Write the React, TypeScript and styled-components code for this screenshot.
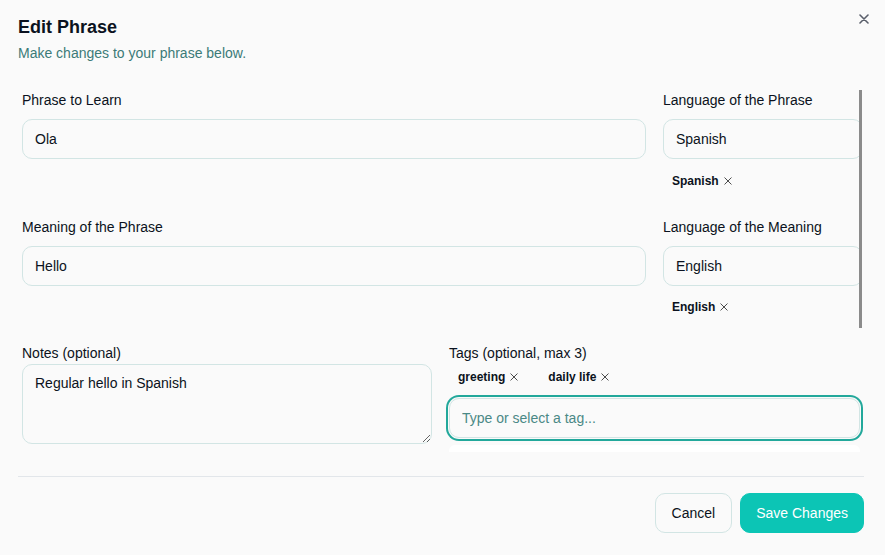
import React from "react";
import styled, { createGlobalStyle } from "styled-components";

const Global = createGlobalStyle`
  html, body { margin: 0; padding: 0; background: #fafafa; }
  body { font-family: "Liberation Sans", Arial, sans-serif; color: #0b1220; }
  * { box-sizing: border-box; }
`;

const Dialog = styled.div`
  position: relative;
  width: 885px;
  height: 555px;
  padding: 15px 21px 0 18px;
  display: flex;
  flex-direction: column;
`;

const Title = styled.h2`
  margin: 0;
  font-size: 18px;
  line-height: 24px;
  font-weight: 700;
  color: #0b1220;
`;

const Subtitle = styled.p`
  margin: 4px 0 0;
  font-size: 14px;
  line-height: 20px;
  color: #3c7b78;
`;

const CloseButton = styled.button`
  position: absolute;
  top: 12px;
  right: 14px;
  width: 14px;
  height: 14px;
  padding: 0;
  border: none;
  background: transparent;
  display: flex;
  align-items: center;
  justify-content: center;
  color: #5a5f6b;
`;

const ScrollArea = styled.div`
  margin-top: 27px;
  width: 844px;
  height: 238px;
  padding: 0 0 0 4px;
  border-right: 3px solid #8b8b8b;
  overflow: hidden;
`;

const TopGrid = styled.div`
  display: grid;
  grid-template-columns: 624px 200px;
  column-gap: 17px;
  row-gap: 26px;
  align-items: start;
`;

const Field = styled.div`
  display: flex;
  flex-direction: column;
`;

const Label = styled.label<{ $gap?: number }>`
  font-size: 14px;
  line-height: 20px;
  color: #0b1220;
  margin-bottom: ${(p) => p.$gap ?? 9}px;
`;

const Input = styled.input<{ $focused?: boolean }>`
  height: 40px;
  width: 100%;
  padding: 0 12px;
  font-family: inherit;
  font-size: 14px;
  color: #0b1220;
  background: #fafafa;
  border: 1px solid #d2e5e4;
  border-radius: 10px;
  outline: none;
  box-shadow: ${(p) =>
    p.$focused ? "0 0 0 1px #fafafa, 0 0 0 3px #22a89b" : "none"};
  &::placeholder { color: #4a8986; }
`;

const TextArea = styled.textarea`
  height: 80px;
  width: 100%;
  padding: 10px 12px;
  font-family: inherit;
  font-size: 14px;
  line-height: 16px;
  color: #0b1220;
  background: #fafafa;
  border: 1px solid #d2e5e4;
  border-radius: 10px;
  outline: none;
  resize: vertical;
  display: block;
`;

const ChipRow = styled.div<{ $top: number }>`
  display: flex;
  gap: 11px;
  margin-top: ${(p) => p.$top}px;
  height: 20px;
  align-items: center;
`;

const Chip = styled.span`
  display: inline-flex;
  align-items: center;
  gap: 5px;
  padding: 0 9px;
  font-size: 12px;
  font-weight: 700;
  color: #0b1220;
  line-height: 20px;
`;

const ChipX = styled.span`
  display: inline-flex;
  width: 9px;
  height: 9px;
  color: #333;
`;

const BottomGrid = styled.div`
  margin-top: 15px;
  padding-left: 4px;
  display: grid;
  grid-template-columns: 410px 411px;
  column-gap: 17px;
  align-items: start;
`;

const TagInputWrap = styled.div`
  margin-top: 11px;
  display: flex;
  flex-direction: column;
`;

const DropdownPeek = styled.div`
  margin-top: 7px;
  height: 7px;
  background: #ffffff;
  border-radius: 6px 6px 0 0;
`;

const Footer = styled.div`
  margin-top: 24px;
  border-top: 1px solid #e2e6ea;
  padding-top: 16px;
  display: flex;
  justify-content: flex-end;
  gap: 8px;
`;

const Button = styled.button<{ $primary?: boolean }>`
  height: 40px;
  padding: 0 ${(p) => (p.$primary ? 15 : 16)}px;
  font-family: inherit;
  font-size: 14px;
  border-radius: 10px;
  border: 1px solid ${(p) => (p.$primary ? "#0cc5b5" : "#d2e5e4")};
  background: ${(p) => (p.$primary ? "#0cc5b5" : "#fafafa")};
  color: ${(p) => (p.$primary ? "#ffffff" : "#0b1220")};
`;

const XIcon = ({ size = 9, stroke = 1.2 }: { size?: number; stroke?: number }) => (
  <svg width={size} height={size} viewBox="0 0 10 10" fill="none">
    <path d="M1 1L9 9M9 1L1 9" stroke="currentColor" strokeWidth={stroke} strokeLinecap="round" />
  </svg>
);

const Tag = ({ text }: { text: string }) => (
  <Chip>
    {text}
    <ChipX>
      <XIcon size={8} stroke={1.1} />
    </ChipX>
  </Chip>
);

export default function App() {
  return (
    <>
      <Global />
      <Dialog>
        <CloseButton aria-label="Close">
          <XIcon size={10} stroke={1.6} />
        </CloseButton>
        <Title>Edit Phrase</Title>
        <Subtitle>Make changes to your phrase below.</Subtitle>

        <ScrollArea>
          <TopGrid>
            <Field>
              <Label>Phrase to Learn</Label>
              <Input defaultValue="Ola" />
            </Field>
            <Field>
              <Label>Language of the Phrase</Label>
              <Input defaultValue="Spanish" />
              <ChipRow $top={12}>
                <Tag text="Spanish" />
              </ChipRow>
            </Field>
            <Field>
              <Label>Meaning of the Phrase</Label>
              <Input defaultValue="Hello" />
            </Field>
            <Field>
              <Label>Language of the Meaning</Label>
              <Input defaultValue="English" />
              <ChipRow $top={11}>
                <Tag text="English" />
              </ChipRow>
            </Field>
          </TopGrid>
        </ScrollArea>

        <BottomGrid>
          <Field>
            <Label $gap={1}>Notes (optional)</Label>
            <TextArea defaultValue="Regular hello in Spanish" />
          </Field>
          <Field>
            <Label $gap={0}>Tags (optional, max 3)</Label>
            <ChipRow $top={4}>
              <Tag text="greeting" />
              <Tag text="daily life" />
            </ChipRow>
            <TagInputWrap>
              <Input $focused placeholder="Type or select a tag..." />
              <DropdownPeek />
            </TagInputWrap>
          </Field>
        </BottomGrid>

        <Footer>
          <Button>Cancel</Button>
          <Button $primary>Save Changes</Button>
        </Footer>
      </Dialog>
    </>
  );
}
